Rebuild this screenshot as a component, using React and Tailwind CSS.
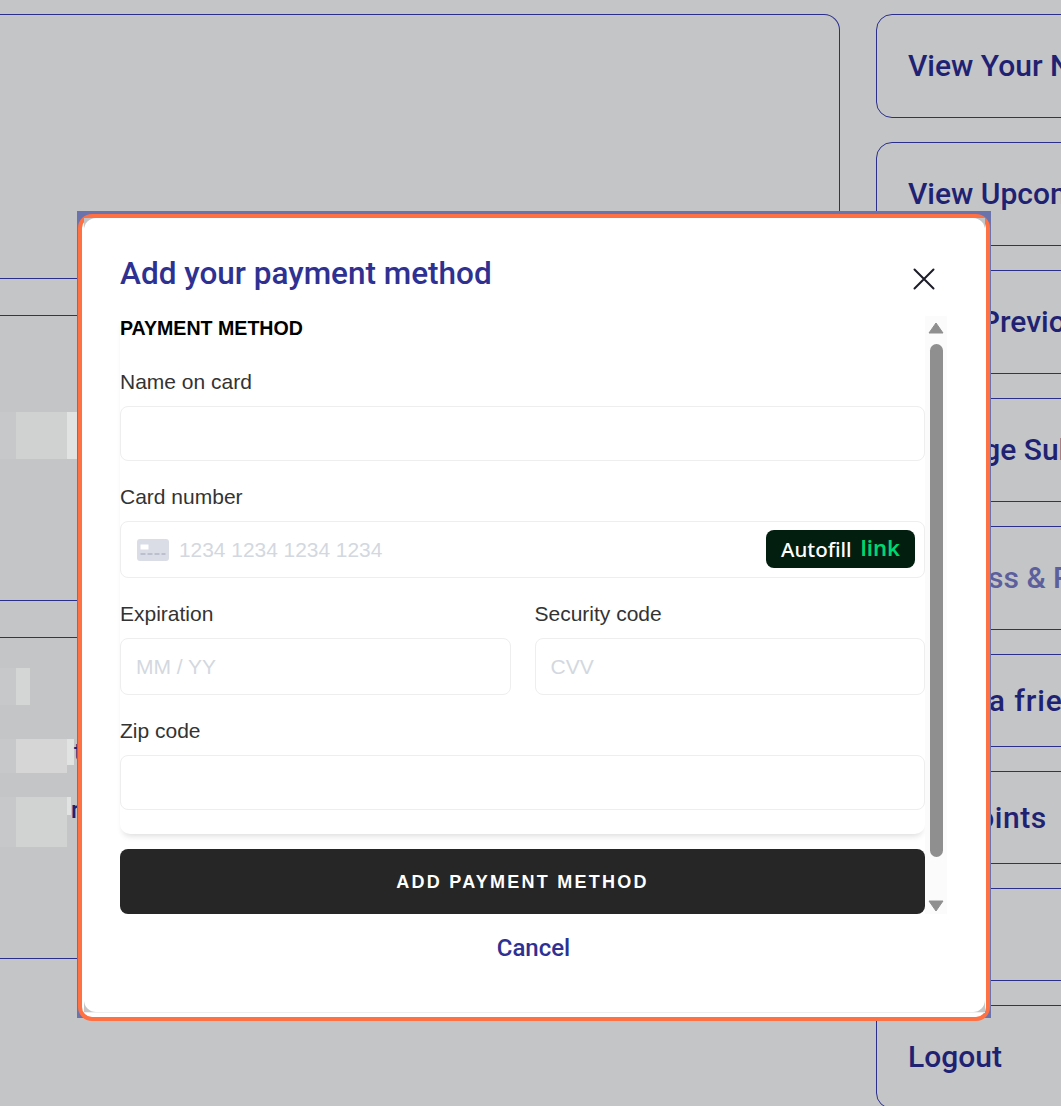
const navItems = [
  { label: "View Your Next Box", height: "h-[104px]" },
  { label: "View Upcoming Boxes", height: "h-[104px]" },
  { label: "View Previous Boxes", height: "h-[104px]" },
  { label: "Manage Subscription", height: "h-[104px]" },
  { label: "Address & Payment", height: "h-[104px]", faded: true },
  { label: "Refer a friend", height: "h-[93px]", extra: "tracking-[0.9px] pl-[27px]" },
  { label: "My Points", height: "h-[93px]", extra: "tracking-[0.5px] pl-[31px]" },
  { label: "", height: "h-[93px]" },
  { label: "Logout", height: "h-[104px]" },
];

function NavCard({ label, height, faded, extra = "pl-[31px]" }) {
  return (
    <div className={`${height} w-[420px] shrink-0 flex items-center pb-px rounded-[16px] border border-[#2b2e8c] font-['Roboto',sans-serif] font-medium text-[30px] whitespace-nowrap ${faded ? "text-[#5c5f9c]" : "text-[#1f2272]"} ${extra}`}>
      {label}
    </div>
  );
}

function BlurBlock({ height, color, width = "w-[51px]", sideHeight, sideWidth = "w-[10px]", tail }) {
  return (
    <div className="flex items-start">
      <div className={`w-4 ${height} bg-[#c7c8c9]`}></div>
      <div className={`${width} ${height} ${color}`}></div>
      {sideHeight && <div className={`${sideWidth} ${sideHeight} bg-[#e1e2e2]`}></div>}
      {tail && <span className="font-['Roboto',sans-serif] font-medium text-[24px] leading-[26px] text-[#1f2272]">{tail}</span>}
    </div>
  );
}

function Field({ label, placeholder, h = "h-[55px]", className = "" }) {
  return (
    <div className={className}>
      <label className="block text-[21px] leading-6 text-[#333333]">{label}</label>
      <input
        readOnly
        placeholder={placeholder}
        className={`mt-3 block w-full ${h} px-[15px] rounded-[8px] border border-[#eeeeee] bg-white text-[21px] outline-none placeholder:text-[#d3d8e0]`}
      />
    </div>
  );
}

function CardIcon() {
  return (
    <svg width="32" height="22" viewBox="0 0 32 22" className="shrink-0">
      <rect width="32" height="22" rx="3" fill="#dadde6" />
      <rect x="3.5" y="5.5" width="8" height="5" fill="#ffffff" />
      <path d="M3.5 15h5M10.5 15h5M17.5 15h5M24.5 15h4" stroke="#b3b7c6" strokeWidth="1.6" />
    </svg>
  );
}

function CloseIcon() {
  return (
    <svg width="22" height="22" viewBox="0 0 22 22" className="shrink-0">
      <path d="M1.5 1.5l19 19M20.5 1.5l-19 19" stroke="#1c1c28" strokeWidth="2" strokeLinecap="round" />
    </svg>
  );
}

function Scrollbar() {
  return (
    <div className="w-[22px] bg-[#fbfbfb] flex flex-col items-center pt-[6px]">
      <svg width="16" height="12" viewBox="0 0 16 12"><path d="M8 1l7 10H1z" fill="#8f8f8f" stroke="#8f8f8f" strokeLinejoin="round" /></svg>
      <div className="w-[13px] h-[513px] mt-[10px] rounded-full bg-[#8f8f8f]"></div>
      <svg width="16" height="12" viewBox="0 0 16 12" className="mt-[43px]"><path d="M1 1h14L8 11z" fill="#8f8f8f" stroke="#8f8f8f" strokeLinejoin="round" /></svg>
    </div>
  );
}

function PaymentModal() {
  return (
    <div className="absolute left-[77px] top-[211px] w-[914px] h-[807px] bg-[#6b73ac]">
      <div className="absolute left-[1px] top-[3px] w-[912px] h-[807px] rounded-[14px] border-[4px] border-[#ff7043] bg-white pl-[2px] pb-[4px] font-['Liberation_Sans',sans-serif]">
        <div className="h-full w-[901px] bg-[#c4c5c7] border-b border-[#eeeeee]">
          <div className="h-full rounded-[12px] bg-white px-9 pt-[38px] flex flex-col">
            <div className="flex justify-between items-start pr-[14px]">
              <h2 className="font-['Roboto',sans-serif] font-medium text-[31.5px] leading-9 text-[#2e3192]">Add your payment method</h2>
              <div className="mt-3"><CloseIcon /></div>
            </div>
            <div className="mt-6 flex">
              <div className="w-[805px]">
                <div className="rounded-b-[10px] shadow-[0_5px_6px_-3px_rgba(0,0,0,0.14)] pb-6">
                  <div className="font-bold text-[19.6px] leading-6 text-black">PAYMENT METHOD</div>
                  <Field label="Name on card" className="mt-[30px]" />
                  <div className="mt-6">
                    <label className="block text-[21px] leading-6 text-[#333333]">Card number</label>
                    <div className="mt-3 h-[57px] pl-4 pr-[9px] flex items-center rounded-[8px] border border-[#eeeeee]">
                      <CardIcon />
                      <input readOnly placeholder="1234 1234 1234 1234" className="ml-[10px] flex-1 text-[20.9px] outline-none placeholder:text-[#d3d8e0]" />
                      <div className="-mt-px w-[149px] h-[38px] rounded-[8px] bg-[#011e0f] flex items-center justify-center gap-[9px] font-['Noto_Sans',sans-serif]">
                        <span className="text-[20.5px] font-medium text-white">Autofill</span>
                        <span className="text-[22px] font-semibold leading-none text-[#00d66f] -mt-1">link</span>
                      </div>
                    </div>
                  </div>
                  <div className="mt-6 grid grid-cols-2 gap-6">
                    <Field label="Expiration" placeholder="MM / YY" h="h-[57px]" />
                    <Field label="Security code" placeholder="CVV" h="h-[57px]" />
                  </div>
                  <Field label="Zip code" className="mt-6" />
                </div>
                <button className="mt-[15px] w-full h-[65px] pt-[2px] rounded-[8px] bg-[#262626] text-white font-bold text-[18px] tracking-[2.25px]">ADD PAYMENT METHOD</button>
              </div>
              <Scrollbar />
            </div>
            <div className="mt-[17px] w-[827px] text-center font-['Roboto',sans-serif] font-medium text-[24px] leading-[34px] text-[#2e3192]">Cancel</div>
          </div>
        </div>
      </div>
    </div>
  );
}

export default function App() {
  return (
    <div className="relative w-[1061px] h-[1106px] overflow-hidden bg-[#c4c5c7] flex pt-[14px]">
      <div className="w-[840px] h-[945px] shrink-0 border-t border-r border-b border-[#2b2e8c] rounded-tr-[16px] flex flex-col">
        <div className="h-[264px] border-b border-[#2b2e8c]"></div>
        <div className="h-[37px] border-b border-[#2b2e8c]"></div>
        <div className="h-[285px] border-b border-[#2b2e8c] pt-[96px]">
          <BlurBlock height="h-[47px]" color="bg-[#d0d2d1]" sideHeight="h-[47px]" />
        </div>
        <div className="h-[37px] border-b border-[#2b2e8c]"></div>
        <div className="flex-1 pt-[30px]">
          <BlurBlock height="h-[37px]" width="w-[14px]" color="bg-[#d4d5d5]" />
          <div className="mt-[34px]">
            <BlurBlock height="h-[34px]" color="bg-[#d5d6d5]" sideHeight="h-[26px]" sideWidth="w-[7px]" tail="t" />
          </div>
          <div className="mt-6">
            <BlurBlock height="h-[50px]" color="bg-[#d1d3d2]" sideHeight="h-[18px]" sideWidth="w-[4px]" tail="r" />
          </div>
        </div>
      </div>
      <div className="ml-[36px] flex flex-col gap-6 shrink-0">
        {navItems.map((item, i) => (
          <NavCard key={i} {...item} />
        ))}
      </div>
      <PaymentModal />
    </div>
  );
}
